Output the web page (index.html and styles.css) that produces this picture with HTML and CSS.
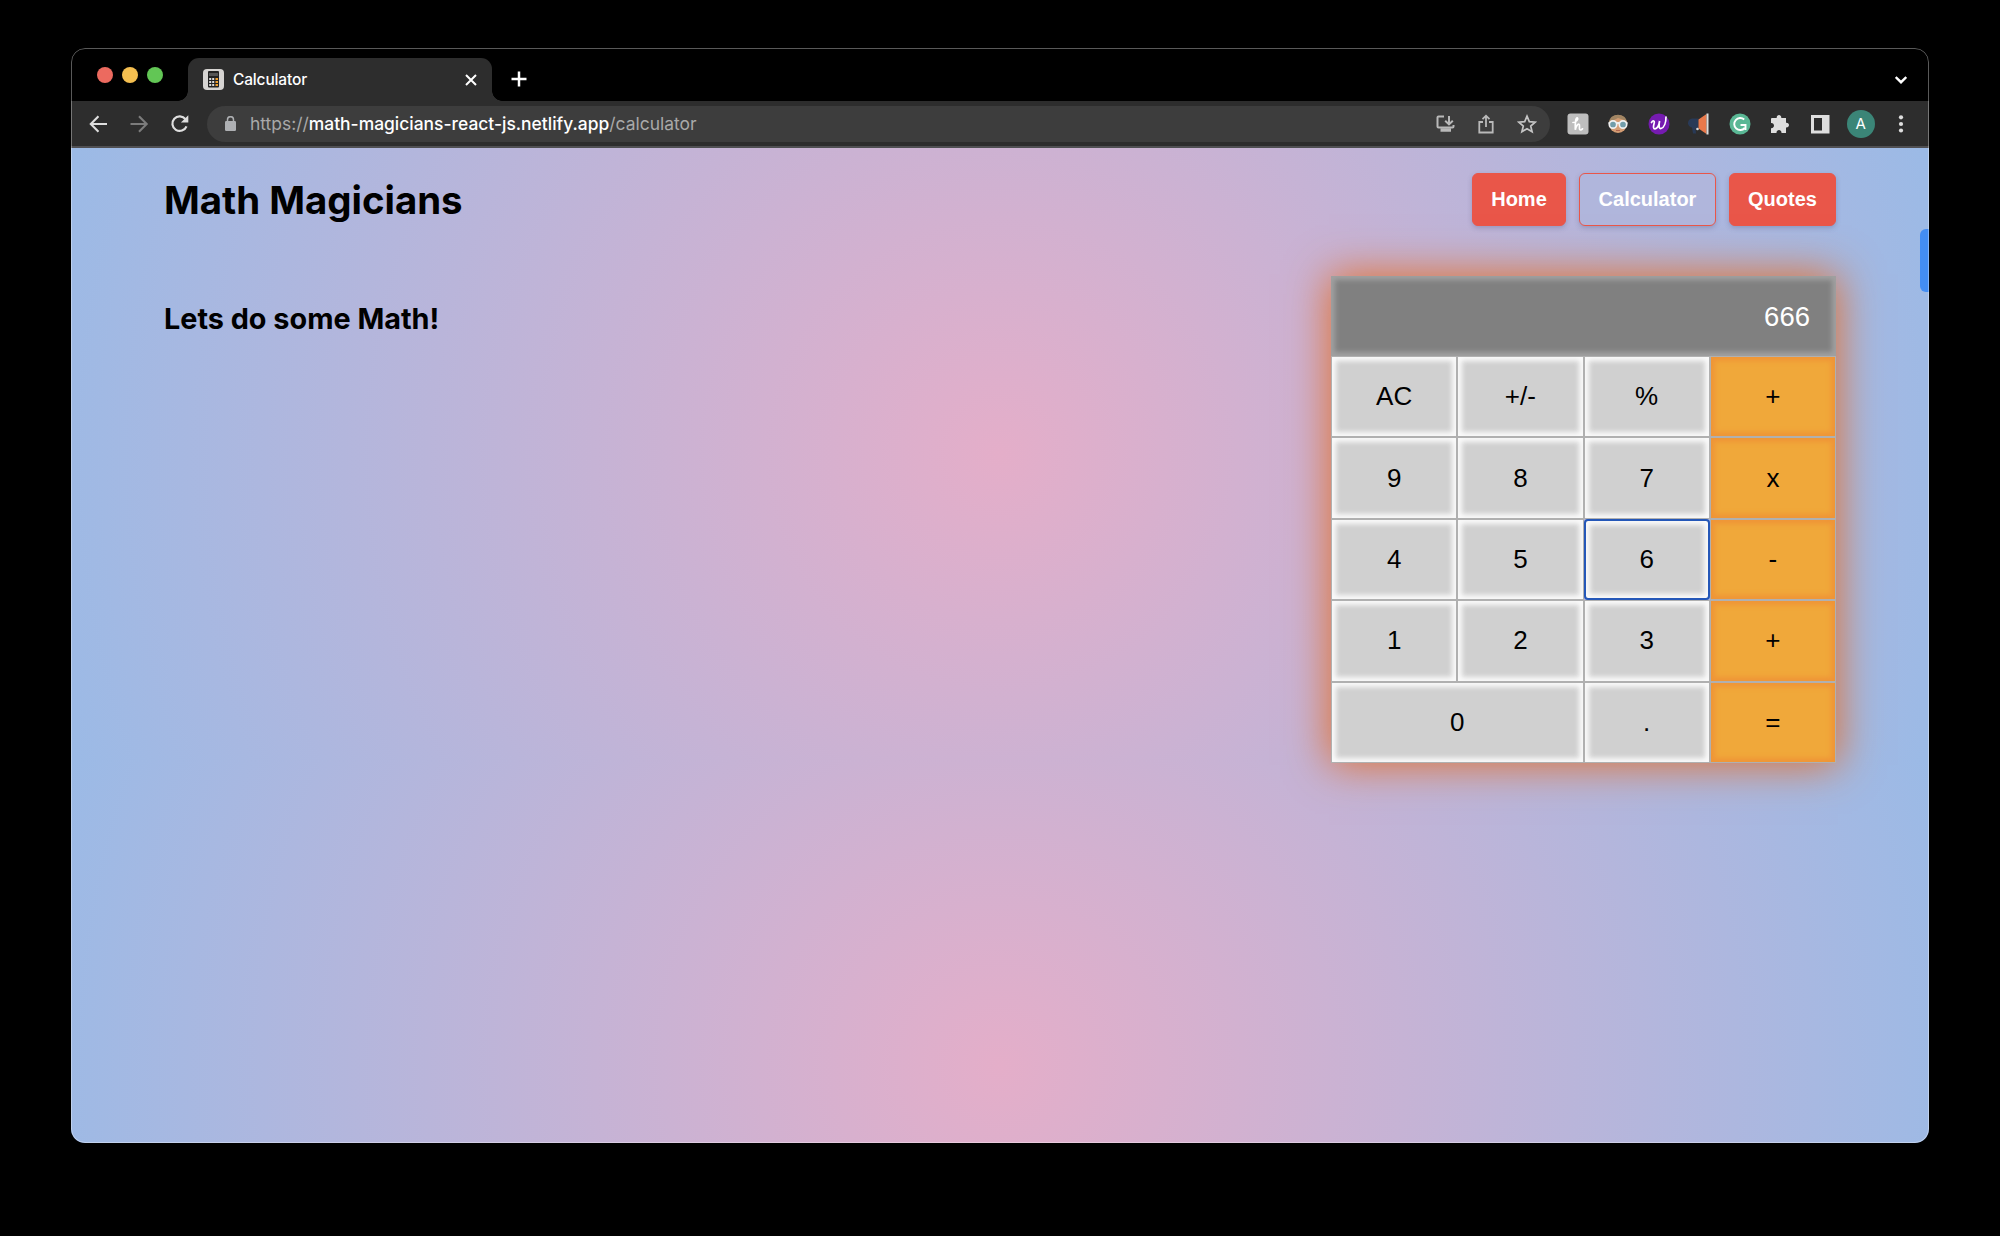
FILE: index.html
```html
<!DOCTYPE html>
<html lang="en">
<head>
<meta charset="utf-8">
<title>Calculator</title>
<link rel="stylesheet" href="styles.css">
</head>
<body>
<div class="window">
  <div class="tabbar">
    <div class="lights"><i class="red"></i><i class="yellow"></i><i class="green"></i></div>
    <div class="tab">
      <svg class="favicon" width="21" height="21" viewBox="0 0 21 21"><rect width="21" height="21" rx="4" fill="#d6d4d2"/><rect x="5" y="2" width="11" height="16.500" rx="1" fill="#222"/><rect x="6" y="4" width="9" height="3" fill="#555"/><g fill="#ddd"><rect x="6.200" y="9" width="2" height="2"/><rect x="9.200" y="9" width="2" height="2"/><rect x="6.200" y="12" width="2" height="2"/><rect x="9.200" y="12" width="2" height="2"/><rect x="6.200" y="15" width="2" height="2"/><rect x="9.200" y="15" width="2" height="2"/></g><g fill="#f0a030"><rect x="12.500" y="9" width="2.500" height="2"/><rect x="12.500" y="12" width="2.500" height="2"/><rect x="12.500" y="15" width="2.500" height="2"/></g></svg>
      <span class="tab-title">Calculator</span>
      <svg width="12" height="12" viewBox="0 0 12 12" fill="none" stroke="#fff" stroke-width="2"><path d="M1 1l10 10M11 1L1 11"/></svg>
    </div>
    <svg class="plus" width="16" height="16" viewBox="0 0 16 16" fill="none" stroke="#fff" stroke-width="2.500"><path d="M8 .5v15M.5 8h15"/></svg>
    <svg class="chevron" width="12" height="8" viewBox="0 0 12 8" fill="none" stroke="#fff" stroke-width="2.400"><path d="M.7 1L6 6.200 11.300 1"/></svg>
  </div>
  <div class="toolbar">
    <div class="history">
      <svg width="20" height="20" viewBox="0 0 20 20" fill="none" stroke="#dedede" stroke-width="2.100"><path d="M18 10H2M9.500 2.300L1.800 10l7.700 7.700"/></svg>
      <svg width="20" height="20" viewBox="0 0 20 20" fill="none" stroke="#7b7b7b" stroke-width="2.100"><path d="M.5 10h16M9 2.300l7.700 7.700L9 17.700"/></svg>
      <svg width="20" height="20" viewBox="0 0 20 20" fill="none" stroke="#dedede" stroke-width="2.200"><path d="M15.500 5.200A7.300 7.300 0 1 0 16.500 12.300"/><path d="M18.300 1.200v7.400h-7.400z" fill="#dedede" stroke="none"/></svg>
    </div>
    <div class="omnibox">
      <svg class="lock" width="11" height="15" viewBox="0 0 11 15"><rect y="5" width="11" height="10" rx="1.300" fill="#aeb0b3"/><path d="M2.500 6V3.700a3 3 0 0 1 6 0V6" fill="none" stroke="#aeb0b3" stroke-width="1.500"/></svg>
      <span class="url">https://<b>math-magicians-react-js.netlify.app</b>/calculator</span>
      <div class="page-actions">
        <svg width="19" height="18" viewBox="0 0 19 18" fill="none" stroke="#b9b9b9" stroke-width="2"><path d="M8 1.500H2.500Q1.500 1.500 1.500 2.500V11.500Q1.500 12.500 2.500 12.500H16.500Q17.500 12.500 17.500 11.500V10M13 1v8M9.200 5.700L13 9.400l3.800-3.700"/><path d="M4.500 15h10.500" stroke-width="3.500"/></svg>
        <svg width="16" height="20" viewBox="0 0 16 20" fill="none" stroke="#b9b9b9" stroke-width="1.800"><path d="M5 8H1.300v10.500h13.400V8H11M8 13V2M4.500 5.200L8 1.700l3.500 3.500"/></svg>
        <svg width="20" height="20" viewBox="0 0 20 20" fill="none" stroke="#c4c4c4" stroke-width="1.700"><path d="M10 2.200l2.300 5.400 5.900.5-4.500 3.900 1.400 5.800L10 14.700l-5.100 3.100L6.300 12 1.800 8.100l5.900-.5z"/></svg>
      </div>
    </div>
    <div class="extensions">
      <svg width="22" height="22" viewBox="0 0 22 22"><rect x=".5" y=".5" width="21" height="21" rx="3" fill="#bebebe"/><path d="M6 9.500C9.500 9 11.500 6 10.500 5 9 4 8 8 8.300 16.800 9 13 10.800 10.800 12 11.200c1.200.5 0 3.500.6 5 .5 1.200 2 1 2.900-.4" fill="none" stroke="#fff" stroke-width="1.700" stroke-linecap="round"/></svg>
      <svg width="22" height="22" viewBox="0 0 22 22"><circle cx="11" cy="11" r="9" fill="#d49c73"/><path d="M2 10C2-1 20-1 20 10L17 7 11 5 5 8z" fill="#a18563"/><path d="M1.500 10h19" stroke="#eee" stroke-width="2"/><circle cx="6" cy="11.500" r="3.700" fill="#719daa" stroke="#f1f1f1" stroke-width="1.700"/><circle cx="16" cy="11.500" r="3.700" fill="#719daa" stroke="#f1f1f1" stroke-width="1.700"/><path d="M9 17.500h4" stroke="#b0644c"/></svg>
      <svg width="22" height="22" viewBox="0 0 22 22"><circle cx="11" cy="11" r="10.500" fill="#751bb0"/><path d="M3.500 9.500C5 7 7 7.500 6 10.800c-.9 3.300-.6 5.200 1 5C9.500 15.500 11 12 11.600 8 10.500 13 11 16 13 15.500c3.200-.8 5-6 5-11.500" fill="none" stroke="#fff" stroke-width="1.700" stroke-linecap="round"/></svg>
      <svg width="22" height="22" viewBox="0 0 22 22"><path d="M10.500 5.500H5a4.500 4.500 0 0 0-1 9l1 6h3l-.5-5h3z" fill="#293a57"/><path d="M10.500 6.500l8-5.500v20l-8-5.500z" fill="#e9794b"/><path d="M19.500.5v21" stroke="#ddd" stroke-width="2"/><circle cx="9.500" cy="16" r="1.300" fill="#ddd"/></svg>
      <svg width="22" height="22" viewBox="0 0 22 22"><circle cx="11" cy="11" r="10.500" fill="#5ab795"/><path d="M15.200 6.500A6 6 0 1 0 15.700 15M11.500 12h5v5" fill="none" stroke="#fff" stroke-width="1.900"/></svg>
      <svg width="22" height="22" viewBox="0 0 22 22"><path d="M3 5h4.700C7.400 1 12.600 1 12.300 5H17v4.700c4-.3 4 5 0 4.700V20h-4.500c.2-4-5.200-4-5 0H2v-4.800c4 .3 4-5.600 0-5.300V6q0-1 1-1z" fill="#dedede"/></svg>
      <svg width="22" height="22" viewBox="0 0 22 22"><path d="M2 2h18.500v18.500H2zM5 5v12.500h8V5z" fill="#dedede" fill-rule="evenodd"/></svg>
      <span class="avatar">A</span>
      <svg width="22" height="22" viewBox="0 0 22 22" fill="#dedede"><circle cx="11" cy="4.300" r="2.100"/><circle cx="11" cy="11" r="2.100"/><circle cx="11" cy="17.500" r="2.100"/></svg>
    </div>
  </div>
  <div class="page">
    <header class="header">
      <h1>Math Magicians</h1>
      <nav><a>Home</a><a class="active">Calculator</a><a>Quotes</a></nav>
    </header>
    <main>
      <h2>Lets do some Math!</h2>
      <div class="calculator">
        <div class="display">666</div>
        <button>AC</button><button>+/-</button><button>%</button><button class="op">+</button>
        <button>9</button><button>8</button><button>7</button><button class="op">x</button>
        <button>4</button><button>5</button><button class="focused">6</button><button class="op">-</button>
        <button>1</button><button>2</button><button>3</button><button class="op">+</button>
        <button class="zero">0</button><button>.</button><button class="op">=</button>
      </div>
    </main>
    <div class="side-handle"></div>
  </div>
</div>
</body>
</html>
```
FILE: styles.css
```css
* { box-sizing: border-box; }
html, body { margin: 0; height: 100%; background: #000; overflow: hidden; }
body { padding: 48px 71px 0; font-family: Inter, "Liberation Sans", sans-serif; }
svg { display: block; flex: none; }

.window {
  position: relative;
  display: flex;
  flex-direction: column;
  width: 1858px;
  height: 1095px;
  border-radius: 14px;
  overflow: hidden;
}
.window::after {
  content: "";
  position: absolute;
  inset: 0;
  border: 1px solid rgba(255, 255, 255, .35);
  border-radius: 14px;
  pointer-events: none;
}

.tabbar { display: flex; height: 53px; padding-left: 26px; flex: none; }
.lights { display: flex; gap: 9.200px; padding-top: 19px; }
.lights i { width: 16px; height: 16px; border-radius: 50%; }
.red { background: #ec6a5f; }
.yellow { background: #f5bf50; }
.green { background: #62c655; }
.tab {
  position: relative;
  display: flex;
  align-items: center;
  width: 304px;
  height: 43px;
  margin: 10px 0 0 24.600px;
  padding: 0 15px;
  border-radius: 11px 11px 0 0;
  background: #2d2d2d;
}
.tab::before, .tab::after {
  content: "";
  position: absolute;
  bottom: 0;
  width: 10px;
  height: 10px;
}
.tab::before { left: -10px; background: radial-gradient(circle at 0 0, transparent 9.500px, #2d2d2d 10px); }
.tab::after { right: -10px; background: radial-gradient(circle at 100% 0, transparent 9.500px, #2d2d2d 10px); }
.tab-title { flex: 1; margin-left: 9px; color: #fff; font-size: 15.500px; font-weight: 500; letter-spacing: -.15px; }
.plus { margin: 23px 0 0 19px; }
.chevron { margin: 28px 22px 0 auto; }

.toolbar {
  display: flex;
  align-items: center;
  flex: none;
  height: 47px;
  padding-left: 18px;
  background: #2d2d2d;
  border-bottom: 2px solid #505053;
}
.history { display: flex; gap: 20.500px; }
.omnibox {
  display: flex;
  align-items: center;
  width: 1343px;
  height: 36px;
  margin-left: 17px;
  padding: 0 13px 0 17.500px;
  border-radius: 18px;
  background: #3d3d3d;
}
.url { margin-left: 14.500px; color: #a9a9a9; font-size: 17.460px; white-space: nowrap; }
.url b { color: #fff; font-weight: 500; }
.page-actions { display: flex; align-items: center; gap: 23px; margin-left: auto; }
.extensions { display: flex; align-items: center; gap: 18.400px; margin-left: 17px; }
.avatar {
  width: 28px;
  height: 28px;
  margin: 0 -3px;
  border-radius: 50%;
  background: #3b8577;
  color: #fff;
  font-size: 15px;
  line-height: 28px;
  text-align: center;
}

.page {
  position: relative;
  flex: 1;
  padding: 25px 93px 0;
  background: radial-gradient(circle, #e4aec9 0%, #9bbae6 100%) 0 0 / 100% 613px;
}
.header { display: flex; justify-content: space-between; height: 55px; }
h1, h2 { margin: 0; color: #000; white-space: nowrap; }
h1 { font-size: 38.400px; font-weight: 650; line-height: 55px; }
h2 { font-size: 28.800px; font-weight: 650; line-height: 40px; margin-top: 23px; }
nav { display: flex; gap: 13px; }
nav a {
  height: 53px;
  padding: 0 18px;
  border: 1px solid #e95649;
  border-radius: 6px;
  background: #e95649;
  box-shadow: 0 2px 5px rgba(80, 80, 120, .3);
  color: #fff;
  font: bold 20px/51px "Liberation Sans", Arial, sans-serif;
  text-align: center;
}
nav a:nth-child(1) { width: 94px; }
nav a:nth-child(2) { width: 137px; }
nav a:nth-child(3) { width: 107px; }
nav .active { background: #b0b6dc; }
main { display: flex; justify-content: space-between; align-items: flex-start; padding-top: 48px; }

.calculator {
  display: grid;
  grid-template-columns: repeat(4, 126.250px);
  grid-template-rows: 80px repeat(5, 81.400px);
  width: 505px;
  box-shadow: 0 0 40px 2px #e07030;
}
.display {
  grid-column: 1 / -1;
  padding: 0 26px;
  background: #808080;
  box-shadow: inset 0 0 5px 4px #a0a0a0;
  color: #fff;
  font: 27.500px/82px "Liberation Sans", Arial, sans-serif;
  text-align: right;
}
button {
  margin: 0;
  padding: 0;
  border: 1px solid #b0b0b0;
  background: #d0d0d0;
  box-shadow: inset 0 0 5px 4px #fafafa;
  color: #000;
  font: 26px "Liberation Sans", Arial, sans-serif;
}
.op { background: #f0a83a; box-shadow: inset 0 0 5px 4px #ef9537; }
.zero { grid-column: span 2; }
.focused { border: 2px solid #2457b8; border-radius: 4px; }
.side-handle {
  position: absolute;
  right: 0;
  top: 81px;
  width: 9px;
  height: 63px;
  border-radius: 6px 0 0 6px;
  background: #438df3;
}
```
